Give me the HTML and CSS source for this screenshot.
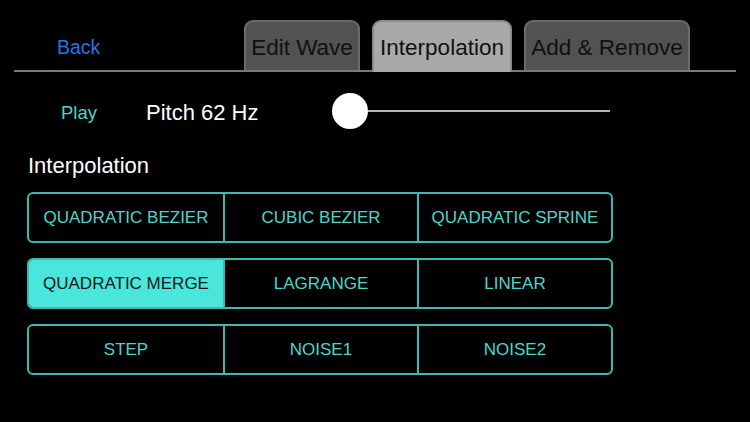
FILE: index.html
```html
<!DOCTYPE html>
<html>
<head>
<meta charset="utf-8">
<link rel="stylesheet" href="styles.css">
</head>
<body>
<div class="screen">
  <div class="topbar">
    <div class="back">Back</div>
    <div class="tabs">
      <div class="tab tab-edit">Edit Wave</div>
      <div class="tab tab-interp tab-active">Interpolation</div>
      <div class="tab tab-add">Add &amp; Remove</div>
    </div>
  </div>
  <div class="playrow">
    <div class="play">Play</div>
    <div class="pitch">Pitch 62 Hz</div>
    <div class="slider">
      <div class="knob"></div>
      <div class="track"></div>
    </div>
  </div>
  <div class="section-label">Interpolation</div>
  <div class="segments">
    <div class="seg-row">
      <div class="seg">QUADRATIC BEZIER</div>
      <div class="seg">CUBIC BEZIER</div>
      <div class="seg">QUADRATIC SPRINE</div>
    </div>
    <div class="seg-row">
      <div class="seg seg-on">QUADRATIC MERGE</div>
      <div class="seg">LAGRANGE</div>
      <div class="seg">LINEAR</div>
    </div>
    <div class="seg-row">
      <div class="seg">STEP</div>
      <div class="seg">NOISE1</div>
      <div class="seg">NOISE2</div>
    </div>
  </div>
</div>
</body>
</html>
```

FILE: styles.css
```css
html, body {
  margin: 0;
  padding: 0;
  background: #000;
}
body {
  font-family: "Liberation Sans", Arial, sans-serif;
  color: #fff;
}
.screen {
  width: 750px;
  height: 422px;
  overflow: hidden;
}
.topbar {
  margin: 0 14px;
  height: 70px;
  border-bottom: 2px solid #7a7a7a;
  display: flex;
  align-items: flex-end;
}
.back {
  color: #2577e3;
  font-size: 19.5px;
  padding-left: 43px;
  align-self: flex-start;
  margin-top: 35px;
  line-height: 24px;
}
.tabs {
  margin-left: auto;
  margin-right: 46px;
  display: flex;
  align-items: flex-end;
  gap: 12px;
}
.tab {
  box-sizing: border-box;
  height: 50px;
  border: 2px solid #6a6a6a;
  border-bottom: none;
  border-radius: 9px 9px 0 0;
  background: #525252;
  color: #111;
  font-size: 22.5px;
  display: flex;
  align-items: center;
  justify-content: center;
  padding-top: 4px;
  white-space: nowrap;
}
.tab-edit { width: 116px; }
.tab-interp { width: 140px; }
.tab-add { width: 166px; }
.tab-active {
  background: #a9a9a9;
  border-color: #8a8a8a;
  height: 52px;
  margin-bottom: -2px;
  padding-bottom: 2px;
}
.playrow {
  display: flex;
  align-items: center;
  height: 40px;
  margin-top: 19px;
  padding-left: 61px;
}
.play {
  width: 85px;
  color: #4fd0c5;
  font-size: 18.5px;
  padding-top: 4px;
}
.pitch {
  width: 186px;
  font-size: 22px;
  color: #fff;
  padding-top: 4px;
}
.slider {
  width: 278px;
  display: flex;
  align-items: center;
}
.knob {
  width: 36px;
  height: 36px;
  border-radius: 50%;
  background: #fff;
  flex: none;
}
.track {
  flex: 1;
  height: 2px;
  background: #b4b4b4;
}
.section-label {
  margin: 21px 0 0 28px;
  font-size: 22px;
  line-height: 28px;
  color: #fff;
}
.segments {
  margin: 12px 0 0 27px;
  width: 586px;
  display: flex;
  flex-direction: column;
  gap: 15px;
}
.seg-row {
  box-sizing: border-box;
  height: 51px;
  border: 2px solid #3cbab2;
  border-radius: 6px;
  display: grid;
  grid-template-columns: 1fr 1fr 1fr;
  overflow: hidden;
}
.seg {
  display: flex;
  align-items: center;
  justify-content: center;
  color: #4dd6cb;
  font-size: 17px;
  white-space: nowrap;
}
.seg + .seg {
  border-left: 2px solid #3cbab2;
}
.seg-on {
  background: #4ae6dc;
  color: #0a1a19;
}
```
